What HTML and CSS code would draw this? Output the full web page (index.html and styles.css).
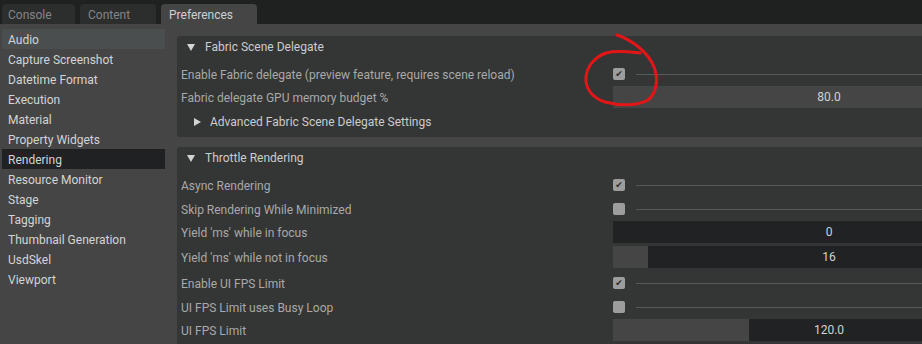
FILE: index.html
```html
<!DOCTYPE html>
<html lang="en">
<head>
  <meta charset="UTF-8" />
  <title>Preferences</title>
  <link rel="stylesheet" href="styles.css">
</head>
<body>
  <div class="tabs">
    <div class="tab tab-console">Console</div>
    <div class="tab tab-content">Content</div>
    <div class="tab tab-prefs active">Preferences</div>
  </div>

  <div class="main">
    <ul class="sidebar">
      <li class="hover">Audio</li>
      <li>Capture Screenshot</li>
      <li>Datetime Format</li>
      <li>Execution</li>
      <li>Material</li>
      <li>Property Widgets</li>
      <li class="selected">Rendering</li>
      <li>Resource Monitor</li>
      <li>Stage</li>
      <li>Tagging</li>
      <li>Thumbnail Generation</li>
      <li>UsdSkel</li>
      <li>Viewport</li>
    </ul>

    <div class="content">
      <div class="frame">
        <div class="frame-head">
          <svg class="arrow" width="8" height="7" viewBox="0 0 8 7"><path d="M0 0 H8 L4 7 Z" fill="#d4d4d4"/></svg>
          Fabric Scene Delegate
        </div>
        <div class="row check-row">
          <label>Enable Fabric delegate (preview feature, requires scene reload)</label>
          <div class="value"><span class="box checked">&#10004;</span><span class="line"></span></div>
        </div>
        <div class="row field-row">
          <label>Fabric delegate GPU memory budget %</label>
          <div class="field float">80.0</div>
        </div>
        <div class="sub-head">
          <svg class="arrow-right" width="7" height="8" viewBox="0 0 7 8"><path d="M0 0 L7 4 L0 8 Z" fill="#d4d4d4"/></svg>
          Advanced Fabric Scene Delegate Settings
        </div>
      </div>

      <div class="frame">
        <div class="frame-head">
          <svg class="arrow" width="8" height="7" viewBox="0 0 8 7"><path d="M0 0 H8 L4 7 Z" fill="#d4d4d4"/></svg>
          Throttle Rendering
        </div>
        <div class="row check-row">
          <label>Async Rendering</label>
          <div class="value"><span class="box checked">&#10004;</span><span class="line"></span></div>
        </div>
        <div class="row check-row">
          <label>Skip Rendering While Minimized</label>
          <div class="value"><span class="box"></span><span class="line"></span></div>
        </div>
        <div class="row field-row">
          <label>Yield 'ms' while in focus</label>
          <div class="field slider"><span class="fill" style="width:0px"></span><span class="num">0</span></div>
        </div>
        <div class="row field-row">
          <label>Yield 'ms' while not in focus</label>
          <div class="field slider"><span class="fill" style="width:35px"></span><span class="num">16</span></div>
        </div>
        <div class="row check-row">
          <label>Enable UI FPS Limit</label>
          <div class="value"><span class="box checked">&#10004;</span><span class="line"></span></div>
        </div>
        <div class="row check-row">
          <label>UI FPS Limit uses Busy Loop</label>
          <div class="value"><span class="box"></span><span class="line"></span></div>
        </div>
        <div class="row field-row">
          <label>UI FPS Limit</label>
          <div class="field slider"><span class="fill" style="width:136px"></span><span class="num">120.0</span></div>
        </div>
      </div>
    </div>
  </div>

  <!-- red annotation circle -->
  <svg class="scribble" width="90" height="90" viewBox="575 25 90 90">
    <path d="M617 35 C632 40 648 52 654 67 C659 80 656 94 648 100 C638 106 620 106 605 102 C592 98 585 88 586 77 C587 66 595 57 606 53 C618 50 630 52 640 53"
          fill="none" stroke="#e21616" stroke-width="3" stroke-linecap="round"/>
  </svg>
</body>
</html>
```

FILE: styles.css
```css
body {
  margin: 0;
  width: 922px;
  height: 344px;
  overflow: hidden;
  background: #454545;
  font-family: Roboto, "DejaVu Sans", sans-serif;
  font-size: 12px;
  color: #a9a9a9;
  position: relative;
}

.tabs {
  height: 24px;
  background: #1f2020;
  display: flex;
  align-items: flex-end;
  gap: 5px;
  padding-left: 2px;
}

.tab {
  height: 20px;
  line-height: 22px;
  padding-left: 6px;
  border-radius: 4px 4px 0 0;
  background: #2c2d2d;
  color: #858585;
  box-sizing: border-box;
}

.tab-console { width: 73px; }
.tab-content { width: 76px; padding-left: 8px; }
.tab-prefs { width: 96px; padding-left: 8px; }

.tab.active {
  background: #454545;
  color: #cfcfcf;
}

.main {
  display: flex;
}

.sidebar {
  list-style: none;
  margin: 0;
  padding: 5px 0 0 2px;
  width: 163px;
  flex: none;
}

.sidebar li {
  height: 20px;
  line-height: 22px;
  padding-left: 6px;
  color: #d4d4d4;
}

.sidebar li.hover {
  background: #4b4e4e;
}

.sidebar li.selected {
  background: #202122;
}

.content {
  padding: 12px 0 0 12px;
  width: 900px;
  flex: none;
  overflow: hidden;
}

.frame {
  background: #343535;
  border-radius: 3px;
  padding: 0 0 4px 4px;
  margin-bottom: 10px;
  overflow: hidden;
}

.frame-head {
  height: 22px;
  line-height: 24px;
  color: #cccccc;
  padding-left: 6px;
  margin-bottom: 4px;
  display: flex;
  align-items: center;
}

.arrow {
  margin-right: 10px;
}

.sub-head {
  height: 22px;
  line-height: 24px;
  margin-top: 3px;
  padding-left: 13px;
  color: #cccccc;
  display: flex;
  align-items: center;
}

.arrow-right {
  margin-right: 9px;
}

.row {
  display: grid;
  grid-template-columns: 432px 432px;
  align-items: center;
}

.row label {
  padding-top: 2px;
}

.check-row {
  height: 24px;
}

.field-row {
  height: 22px;
}

.field-row + .field-row,
.field-row + .check-row {
  margin-top: 3px;
}

.value {
  display: flex;
  align-items: center;
}

.box {
  width: 12px;
  height: 12px;
  background: #9d9d9d;
  border-radius: 2px;
  color: #2a2a2a;
  font-size: 9px;
  line-height: 12px;
  text-align: center;
  flex: none;
}

.line {
  flex: 1;
  height: 1px;
  background: #575858;
  margin-left: 11px;
}

.field {
  height: 22px;
  line-height: 23px;
  text-align: center;
  color: #d2d2d2;
  position: relative;
}

.field.float {
  background: #454545;
}

.field.slider {
  background: #212223;
}

.fill {
  position: absolute;
  left: 0;
  top: 0;
  bottom: 0;
  background: #454545;
}

.num {
  position: relative;
}

.scribble {
  position: absolute;
  left: 575px;
  top: 25px;
}
```
